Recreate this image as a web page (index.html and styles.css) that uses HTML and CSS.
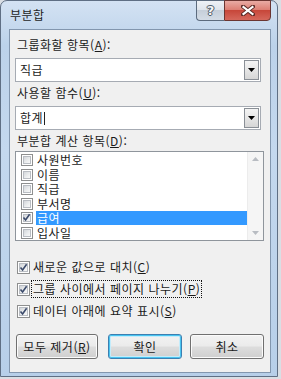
FILE: index.html
```html
<!DOCTYPE html>
<html lang="ko">
<head>
<meta charset="utf-8">
<title>부분합</title>
<link rel="stylesheet" href="styles.css">
</head>
<body>
<div class="window">
  <div class="titlebar">
    <span class="title">부분합</span>
    <div class="caption-buttons">
      <div class="cbtn help"><span class="q">?</span></div>
      <div class="cbtn close">
        <svg width="14" height="11" viewBox="0 0 14 11"><path d="M2 1.5 L12 9.5 M12 1.5 L2 9.5" stroke="#5a2a26" stroke-width="4" stroke-linecap="square"/><path d="M2.5 2 L11.5 9 M11.5 2 L2.5 9" stroke="#ffffff" stroke-width="2.2" stroke-linecap="square"/></svg>
      </div>
    </div>
  </div>
  <div class="client">
    <div class="label">그룹화할 항목(<u>A</u>):</div>
    <div class="combo">
      <span class="value">직급</span>
      <span class="drop"><svg width="7" height="4" viewBox="0 0 7 4"><polygon points="0,0 7,0 3.5,4" fill="#000"/></svg></span>
    </div>
    <div class="label">사용할 함수(<u>U</u>):</div>
    <div class="combo">
      <span class="value">합계<i class="caret"></i></span>
      <span class="drop"><svg width="7" height="4" viewBox="0 0 7 4"><polygon points="0,0 7,0 3.5,4" fill="#000"/></svg></span>
    </div>
    <div class="label">부분합 계산 항목(<u>D</u>):</div>
    <div class="listbox">
      <ul class="items">
        <li class="item"><span class="cb small"></span><span class="txt">사원번호</span></li>
        <li class="item"><span class="cb small"></span><span class="txt">이름</span></li>
        <li class="item"><span class="cb small"></span><span class="txt">직급</span></li>
        <li class="item"><span class="cb small"></span><span class="txt">부서명</span></li>
        <li class="item selected"><span class="cb small checked"><svg class="tick" viewBox="0 0 9 9"><path d="M1.5 4.5 L3.6 7 L7.6 1.2" stroke="#3b4a6b" stroke-width="1.6" fill="none"/></svg></span><span class="txt">급여</span></li>
        <li class="item"><span class="cb small"></span><span class="txt">입사일</span></li>
      </ul>
      <div class="scrollbar">
        <svg width="7" height="4" viewBox="0 0 7 4"><polygon points="0,4 7,4 3.5,0" fill="#b8bcc2"/></svg>
        <svg width="7" height="4" viewBox="0 0 7 4"><polygon points="0,0 7,0 3.5,4" fill="#b8bcc2"/></svg>
      </div>
    </div>
    <div class="options">
      <div class="opt"><span class="cb checked"><svg class="tick" viewBox="0 0 9 9"><path d="M1.5 4.5 L3.6 7 L7.6 1.2" stroke="#3b4a6b" stroke-width="1.6" fill="none"/></svg></span><span class="otxt">새로운 값으로 대치(<u>C</u>)</span></div>
      <div class="opt"><span class="cb checked"><svg class="tick" viewBox="0 0 9 9"><path d="M1.5 4.5 L3.6 7 L7.6 1.2" stroke="#3b4a6b" stroke-width="1.6" fill="none"/></svg></span><span class="otxt focus">그룹 사이에서 페이지 나누기(<u>P</u>)</span></div>
      <div class="opt"><span class="cb checked"><svg class="tick" viewBox="0 0 9 9"><path d="M1.5 4.5 L3.6 7 L7.6 1.2" stroke="#3b4a6b" stroke-width="1.6" fill="none"/></svg></span><span class="otxt">데이터 아래에 요약 표시(<u>S</u>)</span></div>
    </div>
    <div class="buttons">
      <button class="btn wide">모두 제거(<u>R</u>)</button>
      <button class="btn default">확인</button>
      <button class="btn">취소</button>
    </div>
  </div>
</div>
</body>
</html>
```
FILE: styles.css
```css
* { box-sizing: border-box; }
html, body { margin: 0; padding: 0; }
body {
  width: 281px;
  height: 379px;
  overflow: hidden;
  background: #d9dee4;
  font-family: "Noto Sans CJK KR", "Noto Sans", sans-serif;
  font-size: 12px;
  letter-spacing: 0.5px;
  color: #1a1a1a;
}
.window {
  width: 278px;
  height: 377px;
  border: 1px solid #5f6f84;
  border-radius: 7px 7px 0 0;
  background: linear-gradient(180deg, #d3e2f3 0%, #bcd2ea 12%, #c4d8ee 40%, #b7cfe9 100%);
  padding: 0 6px 0 8px;
  display: flex;
  flex-direction: column;
}
.titlebar {
  height: 28px;
  display: flex;
  justify-content: space-between;
  align-items: flex-start;
}
.title {
  padding: 6px 0 0 1px;
  line-height: 16px;
  color: #1e1e1e;
}
.caption-buttons {
  display: flex;
  margin-top: -1px;
}
.cbtn {
  height: 21px;
  border: 1px solid #5c6b7e;
  display: flex;
  align-items: center;
  justify-content: center;
}
.help {
  width: 28px;
  border-right: none;
  border-radius: 0 0 0 4px;
  background: linear-gradient(180deg, #eef2f6 0%, #dfe5ec 45%, #c6cfda 50%, #d4dce6 100%);
}
.q {
  font-family: "DejaVu Sans", sans-serif;
  font-weight: bold;
  font-size: 13px;
  line-height: 13px;
  letter-spacing: 0;
  color: #f4f6f8;
  text-shadow: 0 0 1px #3f4a57, 1px 0 0 #56606c, -1px 0 0 #56606c, 0 1px 0 #56606c, 0 -1px 0 #56606c;
}
.close {
  width: 47px;
  border-color: #6b3531;
  border-radius: 0 0 4px 0;
  background: linear-gradient(180deg, #e9aba4 0%, #dd8075 45%, #c7473a 50%, #d5685c 100%);
}
.client {
  width: 262px;
  height: 344px;
  border: 1px solid #8296ae;
  background: #f0f0f0;
  padding: 7px 0 0 5px;
  display: flex;
  flex-direction: column;
}
.label {
  line-height: 16px;
  height: 16px;
  padding-left: 2px;
  color: #1a1a1a;
}
u { text-decoration: underline; text-underline-offset: 1px; }
.combo {
  width: 246px;
  height: 24px;
  margin: 5px 0 3px 0;
  border: 1px solid #a6abb3;
  background: #fff;
  display: flex;
  align-items: center;
  justify-content: space-between;
  padding: 0 1px 0 4px;
}
.value {
  line-height: 16px;
  display: flex;
  align-items: center;
}
.caret {
  display: inline-block;
  width: 1px;
  height: 13px;
  background: #222;
  margin-left: 1px;
}
.drop {
  width: 15px;
  height: 20px;
  border: 1px solid #8a8f96;
  background: linear-gradient(180deg, #f4f4f4 0%, #e6e6e6 50%, #d6d6d6 100%);
  display: flex;
  align-items: center;
  justify-content: center;
}
.listbox {
  width: 249px;
  height: 90px;
  margin-top: 2px;
  border: 1px solid #8f959c;
  background: #fff;
  display: flex;
  overflow: hidden;
}
.items {
  list-style: none;
  margin: 0;
  padding: 1px 0 0 0;
  flex: 1;
}
.item {
  height: 14.5px;
  display: flex;
  align-items: center;
  padding-left: 5px;
  line-height: 14px;
}
.cb {
  position: relative;
  width: 13px;
  height: 13px;
  flex: none;
  border: 1px solid #8e8f8f;
  background: #fff;
}
.cb::before {
  content: "";
  position: absolute;
  left: 1px; top: 1px; right: 1px; bottom: 1px;
  border: 1px solid #b9bdc3;
  background: linear-gradient(135deg, #d3d6da 0%, #eceeef 60%, #f8f8f8 100%);
}
.cb.small {
  width: 12px;
  height: 12px;
}
.tick {
  position: absolute;
  left: 1px; top: 1px;
  width: 9px; height: 9px;
}
.cb.small .tick { left: 0; top: 0; }
.txt {
  flex: 1;
  margin-left: 3px;
  padding-left: 1px;
  height: 14px;
}
.selected .txt {
  background: #3399ff;
  color: #fff;
}
.scrollbar {
  width: 16px;
  flex: none;
  background: #f5f5f5;
  border-left: 1px solid #ececec;
  display: flex;
  flex-direction: column;
  justify-content: space-between;
  align-items: center;
  padding: 5px 0 5px 0;
}
.options {
  margin-top: 18px;
  display: flex;
  flex-direction: column;
  gap: 6px;
}
.opt {
  height: 16px;
  display: flex;
  align-items: center;
  padding-left: 2px;
}
.otxt {
  margin-left: 2px;
  padding: 0 1px 0 1px;
  line-height: 14px;
  height: 16px;
  display: flex;
  align-items: center;
}
.focus {
  outline: 1px dotted #111;
}
.buttons {
  margin-top: 15px;
  padding-left: 1px;
  display: flex;
  gap: 10px;
}
.btn {
  font-family: "Noto Sans CJK KR", "Noto Sans", sans-serif;
  font-size: 12px;
  letter-spacing: 0.5px;
  color: #1a1a1a;
  width: 74px;
  height: 25px;
  padding: 0;
  border: 1px solid #707070;
  border-radius: 3px;
  background: linear-gradient(180deg, #f2f2f2 0%, #ebebeb 48%, #dddddd 52%, #cfcfcf 100%);
  box-shadow: inset 0 0 0 1px #fbfbfb;
  line-height: 14px;
}
.btn.wide { width: 82px; }
.btn.default {
  border-color: #3c7fb1;
  box-shadow: inset 0 0 0 1px #48c4f0, inset 0 0 0 2px #c4ecfb;
  margin-right: -2px;
}
```
